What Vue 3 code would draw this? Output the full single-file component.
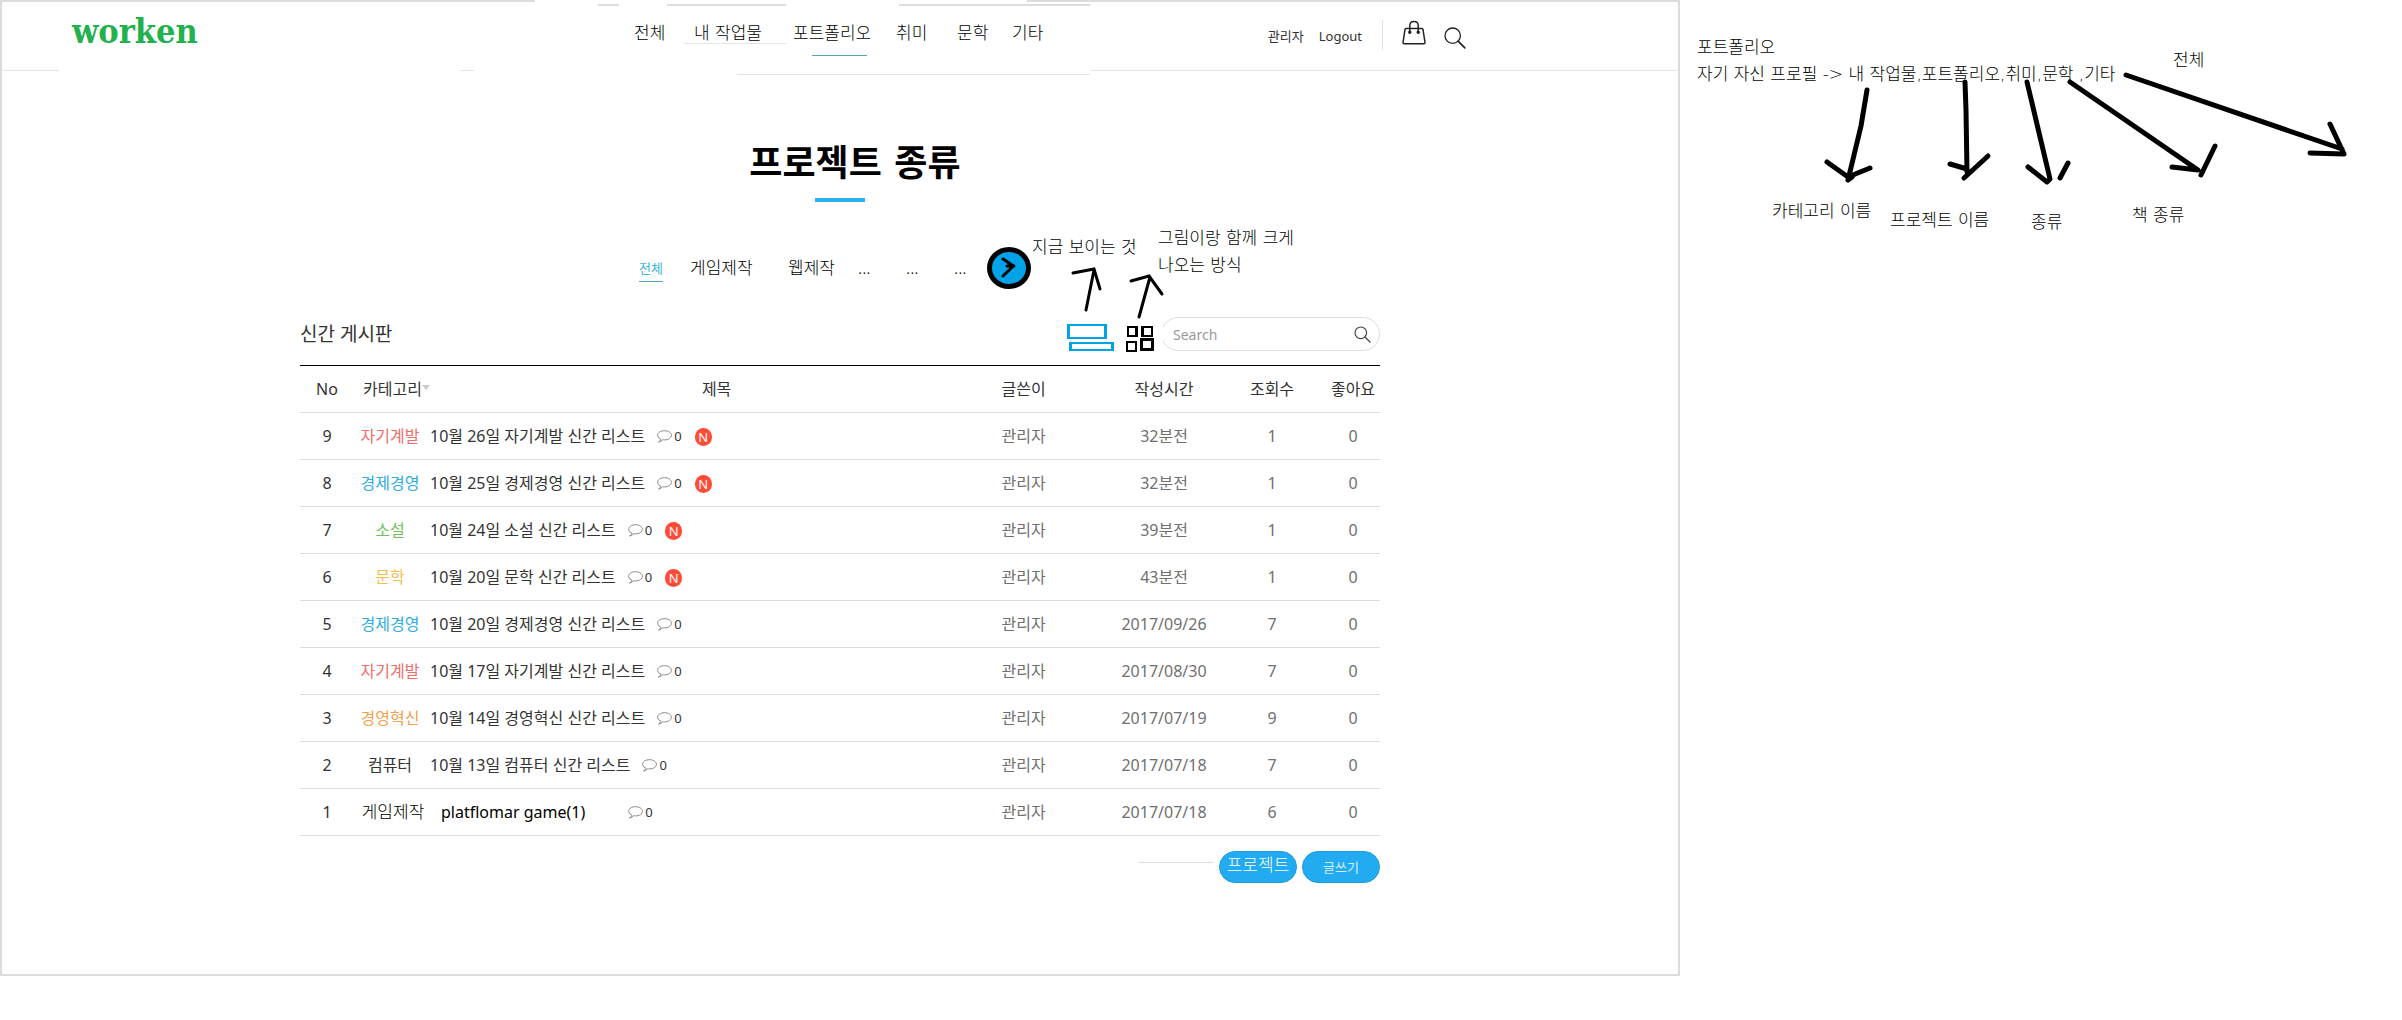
<script setup>
const menu = [
  { label: '전체' },
  { label: '내 작업물' },
  { label: '포트폴리오', current: true },
  { label: '취미' },
  { label: '문학' },
  { label: '기타' },
]

const filters = ['게임제작', '웹제작', '...', '...', '...']

const posts = [
  { no: 9, cat: '자기계발', tone: 'red', title: '10월 26일 자기계발 신간 리스트', time: '32분전', views: 1, fresh: true },
  { no: 8, cat: '경제경영', tone: 'blue', title: '10월 25일 경제경영 신간 리스트', time: '32분전', views: 1, fresh: true },
  { no: 7, cat: '소설', tone: 'green', title: '10월 24일 소설 신간 리스트', time: '39분전', views: 1, fresh: true },
  { no: 6, cat: '문학', tone: 'yellow', title: '10월 20일 문학 신간 리스트', time: '43분전', views: 1, fresh: true },
  { no: 5, cat: '경제경영', tone: 'blue', title: '10월 20일 경제경영 신간 리스트', time: '2017/09/26', views: 7 },
  { no: 4, cat: '자기계발', tone: 'red', title: '10월 17일 자기계발 신간 리스트', time: '2017/08/30', views: 7 },
  { no: 3, cat: '경영혁신', tone: 'orange', title: '10월 14일 경영혁신 신간 리스트', time: '2017/07/19', views: 9 },
  { no: 2, cat: '컴퓨터', tone: 'plain', title: '10월 13일 컴퓨터 신간 리스트', time: '2017/07/18', views: 7 },
  { no: 1, cat: '게임제작', tone: 'draft', title: 'platflomar game(1)', time: '2017/07/18', views: 6, draft: true },
]
</script>

<template>
  <div class="page">
    <div class="panel">
      <svg class="frame-lines" width="1100" height="80" aria-hidden="true">
        <g fill="#fff">
          <rect x="535" y="0" width="492" height="2" />
          <rect x="59" y="70" width="401" height="1" />
          <rect x="474" y="70" width="616" height="1" />
        </g>
        <g fill="#dcdcdc">
          <rect x="598" y="4" width="21" height="2" />
          <rect x="667" y="4" width="119" height="2" />
          <rect x="899" y="4" width="191" height="2" />
        </g>
        <g fill="#e4e4e4">
          <rect x="684" y="43" width="102" height="1" />
          <rect x="737" y="74" width="353" height="1" />
        </g>
      </svg>

      <header class="header">
        <a class="logo" href="#">worken</a>
        <nav class="menu">
          <a v-for="m in menu" :key="m.label" href="#" :class="{ current: m.current }">{{ m.label }}</a>
        </nav>
        <div class="tools">
          <a href="#">관리자</a>
          <a href="#">Logout</a>
          <span class="divider"></span>
          <button type="button" class="icon-btn bag" aria-label="장바구니">
            <svg width="24" height="26" viewBox="0 0 24 26" fill="none" stroke="#222" stroke-width="1.5" stroke-linejoin="round">
              <path d="M4.2 8.5H19.8Q20.800 8.500 21 9.500L23 22.500Q23 23.700 22 23.700H2Q1 23.700 1 22.500L3 9.500Q3.200 8.500 4.200 8.500Z" />
              <path d="M7.800 12V5.500Q7.800 1.500 12 1.500T16.200 5.500V12" />
              <circle cx="7.800" cy="12.200" r="1" fill="#222" />
              <circle cx="16.200" cy="12.200" r="1" fill="#222" />
            </svg>
          </button>
          <button type="button" class="icon-btn find" aria-label="검색">
            <svg width="22" height="22" viewBox="0 0 22 22" fill="none" stroke="#222" stroke-width="1.3" stroke-linecap="round">
              <circle cx="8.700" cy="8.700" r="7.700" />
              <path d="M14.200 14.200L20.800 20.800" stroke-width="1.700" />
            </svg>
          </button>
        </div>
      </header>

      <main class="main">
        <h1>프로젝트 종류</h1>
        <div class="bar"></div>

        <div class="filters">
          <a class="all" href="#">전체</a>
          <a v-for="(f, i) in filters" :key="i" href="#">{{ f }}</a>
          <button type="button" class="next" aria-label="다음">
            <svg width="44" height="42" viewBox="0 0 44 42" fill="none" stroke="#000">
              <ellipse cx="22" cy="21" rx="19.500" ry="18.500" fill="#00a2e8" stroke-width="5" />
              <path d="M16 12L26.500 19L16 29M20 19H27" stroke-width="3" stroke-linecap="round" stroke-linejoin="round" />
            </svg>
          </button>
        </div>

        <div class="board-head">
          <h2>신간 게시판</h2>
          <button type="button" class="icon-btn view-list" aria-label="목록형 보기">
            <svg width="47" height="35" fill="#00a2e8" fill-rule="evenodd">
              <path d="M0 7H40V22H0ZM3 9V20H37V9Z" />
              <path d="M2 25H47V34H2ZM5 27V32H44V27Z" />
            </svg>
          </button>
          <button type="button" class="icon-btn view-grid" aria-label="격자형 보기">
            <svg width="28" height="36" fill="#000" fill-rule="evenodd">
              <path d="M1 9H12V20H1ZM3 11V18H9V11Z" />
              <path d="M15 9H27V20H15ZM18 11V18H25V11Z" />
              <path d="M0 24H11V35H0ZM2 26V33H9V26Z" />
              <path d="M14 21H28V34H14ZM17 24V31H25V24Z" />
            </svg>
          </button>
          <form class="search" @submit.prevent>
            <input type="search" placeholder="Search" aria-label="Search" />
            <button type="submit" class="icon-btn" aria-label="검색">
              <svg width="17" height="17" viewBox="0 0 17 17" fill="none" stroke="#444" stroke-width="1.200" stroke-linecap="round">
                <circle cx="6.800" cy="6.800" r="5.800" />
                <path d="M11 11L16 16" />
              </svg>
            </button>
          </form>
        </div>

        <table>
          <thead>
            <tr>
              <th class="c-no">No</th>
              <th class="c-cat"><button type="button">카테고리<i></i></button></th>
              <th class="c-title">제목</th>
              <th class="c-author">글쓴이</th>
              <th class="c-time">작성시간</th>
              <th class="c-views">조회수</th>
              <th class="c-likes">좋아요</th>
            </tr>
          </thead>
          <tbody>
            <tr v-for="p in posts" :key="p.no">
              <td>{{ p.no }}</td>
              <td :class="['cat', p.tone]">{{ p.cat }}</td>
              <td>
                <div :class="['title', { draft: p.draft }]">
                  <a href="#">{{ p.title }}</a>
                  <span class="comments">
                    <svg width="15" height="13" viewBox="0 0 15 13" fill="none" stroke="#888" stroke-width="1">
                      <path d="M4 9.300Q.6 8 .6 5.300C.6 2.600 3.700.7 7.500.7S14.400 2.600 14.400 5.300 11.300 9.900 7.500 9.900Q6.500 9.900 5.700 9.700Q4 11.800 1.500 12Q3.500 11 4 9.300Z" />
                    </svg>0
                  </span>
                  <span v-if="p.fresh" class="fresh">N</span>
                </div>
              </td>
              <td class="dim">관리자</td>
              <td class="dim">{{ p.time }}</td>
              <td class="dim">{{ p.views }}</td>
              <td class="dim">0</td>
            </tr>
          </tbody>
        </table>

        <div class="actions">
          <span class="stub"></span>
          <button type="button" class="big">프로젝트</button>
          <button type="button">글쓰기</button>
        </div>

        <div class="hints">
          <svg width="1080" height="260" fill="none" stroke="#000" stroke-width="3" stroke-linecap="round" aria-hidden="true">
            <path d="M786 239L794 199M773 202L794 198L800 218" />
            <path d="M839 246L850 206M831 210L849 205L862 223" />
          </svg>
          <p class="hint-list">지금 보이는 것</p>
          <p class="hint-grid">그림이랑 함께 크게<br />나오는 방식</p>
        </div>
      </main>
    </div>

    <aside class="notes">
      <p class="intro">포트폴리오<br />자기 자신 프로필 -&gt; 내 작업물,포트폴리오,취미,문학 ,기타</p>
      <svg width="722" height="240" fill="none" stroke="#000" stroke-width="5" stroke-linecap="round" stroke-linejoin="round" aria-hidden="true">
        <path d="M187 90L181 126L168 180M147 162L168 177L190 168M168 180L172 177" />
        <path d="M285 82L286 110L287 172M270 164L287 169M284 178L308 156" />
        <path d="M347 82L370 179L367 182L348 167M380 178L388 163" />
        <path d="M390 82L518 170L492 167M521 175L535 146" />
        <path d="M446 75L662 149M650 124L664 154L630 153" />
      </svg>
      <span class="pin p-all">전체</span>
      <span class="pin p-category">카테고리 이름</span>
      <span class="pin p-project">프로젝트 이름</span>
      <span class="pin p-kind">종류</span>
      <span class="pin p-book">책 종류</span>
    </aside>
  </div>
</template>

<style>
body {
  margin: 0;
  background: #fff;
}
</style>

<style scoped>
* {
  box-sizing: border-box;
}

.page {
  display: grid;
  grid-template-columns: minmax(0, 1680fr) minmax(0, 722fr);
  align-items: start;
  font-family: "Noto Sans", "Noto Sans CJK KR", sans-serif;
  font-size: 16px;
  color: #333;
}

a {
  color: inherit;
  text-decoration: none;
}

button {
  padding: 0;
  border: 0;
  background: none;
  font: inherit;
  color: inherit;
  cursor: pointer;
}

h1,
h2,
p {
  margin: 0;
}

.panel {
  position: relative;
  border: 2px solid #dcdcdc;
  padding-bottom: 91px;
}

.frame-lines {
  position: absolute;
  top: -2px;
  left: -2px;
}

.header {
  display: flex;
  height: 69px;
  padding: 0 212px 0 70px;
  border-bottom: 1px solid #e4e4e4;
}

.logo {
  width: 562px;
  padding-top: 9px;
  font: bold 34px/40px "DejaVu Serif Condensed", "DejaVu Serif", serif;
  color: #22b14c;
}

.menu {
  position: relative;
  display: grid;
  grid-template-columns: 60px 99px 103px 61px 55px 40px;
  padding-top: 18px;
  font: 300 17px/26px "DejaVu Sans", "Noto Sans CJK KR", sans-serif;
  color: #000;
  white-space: nowrap;
}

.menu .current {
  position: relative;
}

.menu .current::after {
  content: "";
  position: absolute;
  left: 19px;
  top: 35px;
  width: 55px;
  height: 1px;
  background: #4fa9bd;
}

.tools {
  display: flex;
  margin-left: auto;
  padding-top: 18px;
  font-size: 13px;
  line-height: 32px;
  white-space: nowrap;
}

.tools a + a {
  margin-left: 15px;
}

.divider {
  width: 1px;
  height: 30px;
  margin: 0 19px 0 20px;
  background: #e0e0e0;
}

.icon-btn svg {
  display: block;
}

.bag {
  height: 26px;
}

.find {
  height: 22px;
  margin: 7px 0 0 18px;
}

.main {
  position: relative;
  width: 1080px;
  max-width: 100%;
  margin: 0 auto;
  padding-top: 66px;
}

h1 {
  padding-left: 30px;
  font: bold 36px/54px "DejaVu Sans", "Noto Sans CJK KR", sans-serif;
  color: #000;
  text-align: center;
}

.bar {
  width: 50px;
  height: 4px;
  margin: 7px auto 45px;
  background: #29b2ee;
}

.filters {
  display: grid;
  grid-template-columns: 51px 98px 70px 48px 48px 33px 44px;
  align-items: center;
  height: 42px;
  padding-left: 339px;
  font: 300 17px/26px "Noto Sans", "Noto Sans CJK KR", sans-serif;
  color: #000;
}

.filters .all {
  justify-self: start;
  border-bottom: 1px solid #4fa9bd;
  font-size: 13px;
  font-weight: 400;
  color: #3fb4dd;
}

.next,
.next svg {
  display: block;
}

.board-head {
  display: flex;
  height: 34px;
  margin: 28px 0 14px;
}

h2 {
  margin-right: auto;
  font-size: 19px;
  font-weight: 400;
  line-height: 34px;
}

.view-list {
  margin-right: 12px;
}

.view-grid {
  margin-right: 7px;
}

.board-head > .icon-btn {
  height: 34px;
}

.search {
  display: flex;
  align-items: center;
  width: 219px;
  height: 34px;
  padding: 0 8px 0 11px;
  border: 1px solid #ddd;
  border-radius: 17px;
  clip-path: inset(0 0 0 2px);
}

.search input {
  flex: 1;
  min-width: 0;
  padding: 0;
  border: 0;
  outline: 0;
  background: none;
  font: inherit;
  font-size: 14px;
}

.search input::placeholder {
  color: #999;
}

table {
  width: 100%;
  table-layout: fixed;
  border-top: 1px solid #000;
  border-spacing: 0;
}

th,
td {
  height: 47px;
  padding: 0;
  border-bottom: 1px solid #ddd;
  font-weight: 400;
  line-height: 24px;
  text-align: center;
  white-space: nowrap;
}

.c-no,
.c-likes {
  width: 5%;
}

.c-cat {
  width: 72px;
  padding-left: 9px;
  text-align: left;
}

.c-cat button {
  display: flex;
  align-items: center;
}

.c-cat i {
  flex: none;
  margin-bottom: 3px;
  border: 4px solid transparent;
  border-top: 5px solid #ccc;
  border-bottom: 0;
}

.c-title {
  padding-left: 70px;
}

.c-author {
  width: 16%;
}

.c-time,
.c-views {
  width: 10%;
}

.red { color: #ef6d6b; }
.blue { color: #2eabe6; }
.green { color: #6dc05c; }
.yellow { color: #efc04c; }
.orange { color: #f0a04e; }

.draft {
  color: #000;
}

.cat.draft {
  padding-left: 6px;
  font-size: 17px;
  font-weight: 300;
}

.dim {
  color: #707070;
}

.title {
  display: flex;
  align-items: center;
  padding-left: 4px;
}

.title.draft {
  padding-left: 15px;
}

.comments {
  display: flex;
  align-items: center;
  gap: 2px;
  margin-left: 12px;
  font-size: 13px;
  color: #333;
}

.title.draft .comments {
  margin-left: 43px;
}

.fresh {
  width: 17px;
  height: 18px;
  margin: 2px 0 0 13px;
  border-radius: 9px;
  background: #ff4b37;
  font-size: 13px;
  line-height: 18px;
  color: #fff;
}

.actions {
  display: flex;
  justify-content: flex-end;
  gap: 5px;
  margin-top: 15px;
}

.actions .stub {
  width: 76px;
  height: 12px;
  border-bottom: 1px solid #ddd;
}

.actions button {
  width: 78px;
  height: 32px;
  border: 1px solid #1d9fdc;
  border-radius: 16px;
  background: #22abf0;
  font-size: 13px;
  line-height: 30px;
  color: #d5f1ff;
}

.actions .big {
  font-size: 17px;
  font-weight: 300;
  line-height: 24px;
  padding-bottom: 4px;
  color: #fff;
}

.hints {
  position: absolute;
  top: 0;
  left: 0;
  pointer-events: none;
}

.hints p,
.notes {
  font: 300 17px/27px "DejaVu Sans", "Noto Sans CJK KR", sans-serif;
  color: #000;
  white-space: nowrap;
}

.hints p {
  position: absolute;
}

.hint-list {
  top: 163px;
  left: 732px;
}

.hint-grid {
  top: 154px;
  left: 858px;
}

.notes {
  position: relative;
  padding: 34px 0 0 17px;
}

.notes svg {
  position: absolute;
  top: 0;
  left: 0;
}

.pin {
  position: absolute;
}

.p-all {
  top: 47px;
  left: 493px;
}

.p-category {
  top: 198px;
  left: 92px;
}

.p-project {
  top: 207px;
  left: 210px;
}

.p-kind {
  top: 209px;
  left: 351px;
}

.p-book {
  top: 202px;
  left: 452px;
}
</style>
